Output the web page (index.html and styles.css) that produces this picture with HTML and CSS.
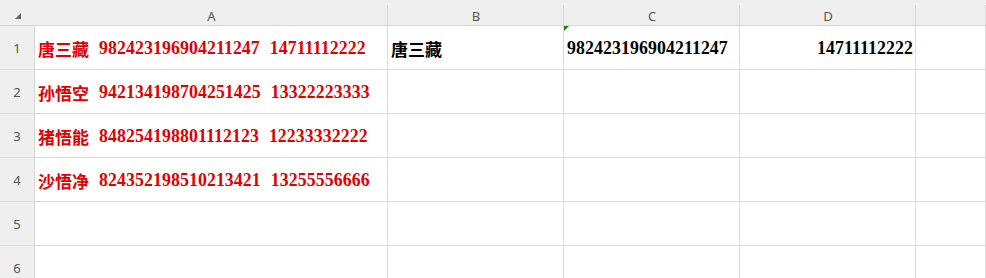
FILE: index.html
```html
<!DOCTYPE html>
<html lang="zh">
<head>
<meta charset="utf-8">
<link rel="stylesheet" href="styles.css">
</head>
<body>
<div class="sheet">
  <div class="corner"><span class="corner-tri"></span></div>
  <div class="colhead">A</div>
  <div class="colhead">B</div>
  <div class="colhead">C</div>
  <div class="colhead">D</div>
  <div class="colhead last"></div>

  <div class="rowhead">1</div>
  <div class="cell red"><span class="cn">唐三藏</span><span class="num">982423196904211247</span><span class="num">14711112222</span></div>
  <div class="cell"><span class="cn">唐三藏</span></div>
  <div class="cell flag"><span class="num">982423196904211247</span></div>
  <div class="cell right"><span class="num">14711112222</span></div>
  <div class="cell"></div>

  <div class="rowhead">2</div>
  <div class="cell red"><span class="cn">孙悟空</span><span class="num">942134198704251425</span><span class="num">13322223333</span></div>
  <div class="cell"></div>
  <div class="cell"></div>
  <div class="cell"></div>
  <div class="cell"></div>

  <div class="rowhead">3</div>
  <div class="cell red"><span class="cn">猪悟能</span><span class="num">848254198801112123</span><span class="num">12233332222</span></div>
  <div class="cell"></div>
  <div class="cell"></div>
  <div class="cell"></div>
  <div class="cell"></div>

  <div class="rowhead">4</div>
  <div class="cell red"><span class="cn">沙悟净</span><span class="num">824352198510213421</span><span class="num">13255556666</span></div>
  <div class="cell"></div>
  <div class="cell"></div>
  <div class="cell"></div>
  <div class="cell"></div>

  <div class="rowhead">5</div>
  <div class="cell"></div>
  <div class="cell"></div>
  <div class="cell"></div>
  <div class="cell"></div>
  <div class="cell"></div>

  <div class="rowhead">6</div>
  <div class="cell"></div>
  <div class="cell"></div>
  <div class="cell"></div>
  <div class="cell"></div>
  <div class="cell"></div>
</div>
</body>
</html>
```

FILE: styles.css
```css
html, body {
  margin: 0;
  padding: 0;
  background: #ffffff;
  overflow: hidden;
}

.sheet {
  display: grid;
  grid-template-columns: 35px 353px 176px 176px 176px 70px;
  grid-template-rows: 26px repeat(6, 44px);
  width: 986px;
  background: #efefef;
}

.corner {
  background: #efefef;
  border-bottom: 1px solid #d6d6d6;
  position: relative;
}

.corner-tri {
  position: absolute;
  left: 15px;
  top: 13px;
  width: 0;
  height: 0;
  border-left: 6px solid transparent;
  border-bottom: 6px solid #666666;
}

.colhead {
  background: #efefef;
  border-bottom: 1px solid #d6d6d6;
  display: flex;
  align-items: center;
  justify-content: center;
  padding-top: 6px;
  box-sizing: border-box;
  font-family: "Noto Sans", "Liberation Sans", sans-serif;
  font-size: 13px;
  color: #555555;
  background-image: linear-gradient(#dadada, #dadada);
  background-size: 1px 20px;
  background-position: right bottom;
  background-repeat: no-repeat;
}

.rowhead {
  background: #efefef;
  border-bottom: 1px solid #e0e0e0;
  border-right: 1px solid #d6d6d6;
  box-sizing: border-box;
  display: flex;
  align-items: center;
  justify-content: center;
  font-family: "Noto Sans", "Liberation Sans", sans-serif;
  font-size: 13px;
  color: #555555;
}

.cell {
  background: #ffffff;
  border-right: 1px solid #dcdcdc;
  border-bottom: 1px solid #dcdcdc;
  box-sizing: border-box;
  display: flex;
  align-items: center;
  gap: 10px;
  padding: 1px 2px 0 3px;
  font-weight: bold;
  color: #000000;
  position: relative;
  white-space: nowrap;
}

.cell.red {
  color: #e00000;
}

.cell.right {
  justify-content: flex-end;
}

.cn {
  font-family: "Noto Sans CJK SC", sans-serif;
  font-size: 17px;
  font-weight: bold;
}

.num {
  font-family: "Liberation Serif", serif;
  font-size: 17.8px;
  font-weight: bold;
  letter-spacing: 0.1px;
}

.cell.flag::before {
  content: "";
  position: absolute;
  left: 0;
  top: 0;
  width: 0;
  height: 0;
  border-top: 5px solid #1e7b1e;
  border-right: 5px solid transparent;
}
```
